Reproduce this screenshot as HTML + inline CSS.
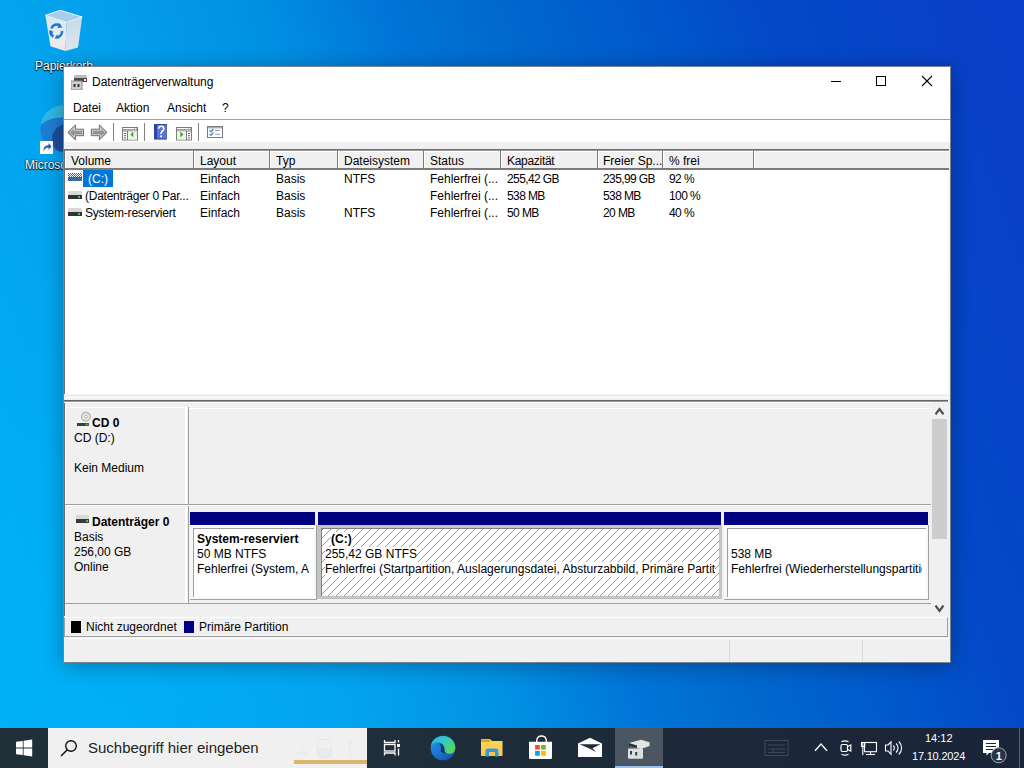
<!DOCTYPE html>
<html><head><meta charset="utf-8">
<style>
*{margin:0;padding:0;box-sizing:border-box}
html,body{width:1024px;height:768px;overflow:hidden}
body{position:relative;font-family:"Liberation Sans",sans-serif;font-size:12px;color:#000;
background:radial-gradient(ellipse 420px 380px at 120px 640px,rgba(0,184,255,.35),rgba(0,184,255,0) 100%),linear-gradient(70deg,#00b0f6 0%,#04a0ec 28%,#0090e2 41%,#0074d8 51%,#006cd0 57%,#0056ca 72%,#0448c8 80%,#0a3ec8 100%);}
.a{position:absolute}
.t{position:absolute;white-space:nowrap;line-height:14px}
.b{font-weight:bold}
#win{position:absolute;left:63px;top:66px;width:888px;height:597px;background:#f0f0f0;border:1px solid rgba(20,40,70,.55);box-shadow:0 3px 20px rgba(0,0,0,.3)}
.hd{position:absolute;top:150px;height:20px;background:#f0f0f0;border-top:1px solid #9a9a9a;box-shadow:inset 1px 1px 0 #fff;border-right:1px solid #7a7a7a;border-bottom:2px solid #7a7a7a}
.sep{position:absolute;top:123px;width:1px;height:18px;background:#808080}
</style></head>
<body>
<!-- desktop icons -->
<div id="desk">
<svg class="a" style="left:0;top:0" width="100" height="160" viewBox="0 0 100 160">
 <defs>
  <linearGradient id="rbl" x1="0" y1="0" x2="0" y2="1"><stop offset="0" stop-color="#d6e6f0"/><stop offset=".7" stop-color="#e8eef2"/><stop offset="1" stop-color="#f2e6e6"/></linearGradient>
  <linearGradient id="rbr" x1="0" y1="0" x2="0" y2="1"><stop offset="0" stop-color="#c4dcea"/><stop offset="1" stop-color="#dde6ec"/></linearGradient>
  <linearGradient id="eg" x1="0" y1="0" x2="1" y2="0"><stop offset="0" stop-color="#30b4ea"/><stop offset="1" stop-color="#38c0d8"/></linearGradient>
  <clipPath id="ec"><rect x="0" y="0" width="63" height="160"/></clipPath>
 </defs>
 <path d="M45.3 15.3 L66.7 22.3 L65.3 51.1 L50.5 46.2Z" fill="url(#rbl)"/>
 <path d="M66.7 22.3 L82.2 17 L78 47.6 L65.3 51.1Z" fill="url(#rbr)"/>
 <path d="M45.3 15.3 L60.4 10.3 L82.2 17 L66.7 22.3Z" fill="#a6cdea"/>
 <path d="M45.3 15.3 L60.4 10.3 L82.2 17 L66.7 22.3Z" fill="none" stroke="#e6f4fc" stroke-width="1"/>
 <g fill="none" stroke="#1e78d0" stroke-width="2.6">
  <path d="M51.5 28.5 A5.5 5.5 0 0 1 60 25.5"/>
  <path d="M62 31 A5.5 5.5 0 0 1 57.5 37"/>
  <path d="M53.5 36.5 A5.5 5.5 0 0 1 50.8 30.5"/>
 </g>
 <path d="M59 23 L62.5 27.5 L57.5 28Z M59 38.8 L54.5 38.5 L57 34.5Z M49 31 L51 35.5 L53.5 31.5Z" fill="#1e78d0"/>
 <g clip-path="url(#ec)">
  <circle cx="63.5" cy="128.5" r="23.3" fill="url(#eg)"/>
  <clipPath id="ec2"><circle cx="63.5" cy="128.5" r="23.3"/></clipPath>
  <g clip-path="url(#ec2)"><circle cx="61" cy="150" r="32.5" fill="#1d7ed4"/>
  <circle cx="67" cy="139" r="15" fill="#1c4e9c"/></g>
 </g>
 <rect x="40" y="141" width="13" height="13" fill="#fff"/>
 <path d="M43.5 151.5 Q43 145.5 48.5 145.3 L48.5 143.3 L51.5 146.5 L48.5 149.7 L48.5 147.6 Q45 147.5 43.5 151.5Z" fill="#2b5aa6"/>
</svg>
<div class="t" style="left:35px;top:59px;color:#fff;text-shadow:0 0 2px #000,0 1px 1px #000">Papierkorb</div>
<div class="t" style="left:25px;top:158px;color:#fff;text-shadow:0 0 2px #000,0 1px 1px #000">Microsoft Edge</div>
</div>
<div id="win"></div>
<!-- title bar -->
<div class="a" style="left:64px;top:67px;width:886px;height:52px;background:#fff"></div>
<svg class="a" style="left:71px;top:74px" width="16" height="16" viewBox="0 0 16 16">
  <rect x="3" y="1" width="13" height="3" rx="1" fill="#bdbdbd"/>
  <rect x="3" y="4" width="13" height="4" fill="#4a4a4a"/>
  <rect x="13" y="5" width="2" height="2" fill="#e8e8e8"/>
  <rect x="0" y="7" width="11" height="9" fill="#cfcfcf" stroke="#8a8a8a" stroke-width="1"/>
  <rect x="2.5" y="10" width="2" height="3" fill="#333"/><rect x="6.5" y="10" width="2" height="3" fill="#333"/>
</svg>
<div class="t" style="left:92px;top:75px">Datenträgerverwaltung</div>
<!-- caption buttons -->
<div class="a" style="left:831px;top:81px;width:10px;height:1px;background:#000"></div>
<div class="a" style="left:876px;top:76px;width:10px;height:10px;border:1px solid #000"></div>
<svg class="a" style="left:921px;top:75px" width="12" height="12" viewBox="0 0 12 12"><path d="M1 1 L11 11 M11 1 L1 11" stroke="#000" stroke-width="1.1"/></svg>
<!-- menu -->
<div class="t" style="left:73px;top:101px">Datei</div>
<div class="t" style="left:116px;top:101px">Aktion</div>
<div class="t" style="left:167px;top:101px">Ansicht</div>
<div class="t" style="left:222px;top:101px">?</div>
<div class="a" style="left:64px;top:119px;width:886px;height:1px;background:#a0a0a0"></div>
<!-- toolbar -->
<div class="a" style="left:64px;top:120px;width:886px;height:22px;background:#fff"></div>
<div class="sep" style="left:113px"></div>
<div class="sep" style="left:144px"></div>
<div class="sep" style="left:198px"></div>
<svg class="a" style="left:60px;top:120px" width="170" height="24" viewBox="60 120 170 24">
 <defs>
  <linearGradient id="ar" x1="0" y1="0" x2="0" y2="1"><stop offset="0" stop-color="#c4c4c4"/><stop offset=".55" stop-color="#8e8e8e"/><stop offset="1" stop-color="#b0b0b0"/></linearGradient>
 </defs>
 <path d="M67.8 132.4 L75.4 125 L75.4 129.2 L83.5 129.2 L83.5 135.7 L75.4 135.7 L75.4 139.8 Z" fill="url(#ar)" stroke="#6a6a6a" stroke-width="1" stroke-linejoin="round"/>
 <path d="M69.4 132.4 L74.4 127.5 L74.4 130.2 L82.5 130.2 L82.5 134.7 L74.4 134.7 L74.4 137.3 Z" fill="none" stroke="#f4f4f4" stroke-width=".7" opacity=".8"/>
 <path d="M107 132.4 L99.4 125 L99.4 129.2 L91.3 129.2 L91.3 135.7 L99.4 135.7 L99.4 139.8 Z" fill="url(#ar)" stroke="#6a6a6a" stroke-width="1" stroke-linejoin="round"/>
 <path d="M105.4 132.4 L100.4 127.5 L100.4 130.2 L92.3 130.2 L92.3 134.7 L100.4 134.7 L100.4 137.3 Z" fill="none" stroke="#f4f4f4" stroke-width=".7" opacity=".8"/>
 <!-- icon1 -->
 <rect x="122.5" y="127.5" width="15" height="12.5" fill="#fff" stroke="#7c7c7c"/>
 <path d="M123 129.6 L133 129.6" stroke="#9a9a9a" stroke-width="1.2"/>
 <rect x="133.6" y="128.6" width="1.4" height="1.4" fill="#7c7c7c"/><rect x="135.6" y="128.6" width="1.4" height="1.4" fill="#7c7c7c"/>
 <path d="M123 131 L137 131" stroke="#7c7c7c" stroke-width="1"/>
 <path d="M127.5 131 L127.5 140" stroke="#7c7c7c" stroke-width="1"/>
 <rect x="128" y="131.5" width="9" height="8" fill="#eef6ea"/>
 <path d="M124 133.5 L126 133.5 M124 135.7 L126 135.7 M124 137.9 L126 137.9" stroke="#606060" stroke-width="1"/>
 <path d="M130.3 134.5 L133.3 131.8 L133.3 137.3Z" fill="#3fa52f"/>
 <!-- help -->
 <rect x="154" y="124" width="12.8" height="15.6" fill="#2c46a8"/>
 <rect x="157" y="125" width="9" height="13.6" fill="#5a74d6"/>
 <path d="M158.6 128.8 Q158.8 126.3 161.2 126.3 Q163.8 126.3 163.8 128.8 Q163.8 130.4 162 131.5 Q161 132.2 161 134" stroke="#fff" stroke-width="1.6" fill="none"/>
 <rect x="160.2" y="135.4" width="1.8" height="1.8" fill="#fff"/>
 <!-- icon3 -->
 <rect x="176.5" y="127.5" width="15" height="12.5" fill="#fff" stroke="#7c7c7c"/>
 <path d="M177 129.6 L187 129.6" stroke="#9a9a9a" stroke-width="1.2"/>
 <rect x="187.6" y="128.6" width="1.4" height="1.4" fill="#7c7c7c"/><rect x="189.6" y="128.6" width="1.4" height="1.4" fill="#7c7c7c"/>
 <path d="M177 131 L191 131" stroke="#7c7c7c" stroke-width="1"/>
 <path d="M186.5 131 L186.5 140" stroke="#7c7c7c" stroke-width="1"/>
 <rect x="177" y="131.5" width="9" height="8" fill="#eef6ea"/>
 <path d="M188 133.5 L190 133.5 M188 135.7 L190 135.7 M188 137.9 L190 137.9" stroke="#606060" stroke-width="1"/>
 <path d="M180.3 131.8 L183.6 134.5 L180.3 137.3Z" fill="#3fa52f"/>
 <!-- checklist -->
 <rect x="207.5" y="126.5" width="15" height="11" fill="#fff" stroke="#7c7c7c"/>
 <path d="M208 127.8 L222 127.8" stroke="#8a8a8a" stroke-width="1"/>
 <path d="M209.5 130.3 L211 131.8 L213.3 129 M209.5 133.8 L211 135.3 L213.3 132.5" stroke="#3a82d6" stroke-width="1.2" fill="none"/>
 <path d="M215 130.5 L220 130.5 M215 134.3 L220 134.3" stroke="#8aa0b8" stroke-width="1"/>
</svg>
<!-- gray band -->
<!-- list view -->
<div class="a" style="left:64px;top:149px;width:885px;height:252px;background:#fff;border-top:1px solid #6e6e6e;border-left:1px solid #6e6e6e"></div>
<div class="hd" style="left:65px;width:129px"></div>
<div class="hd" style="left:194px;width:76px"></div>
<div class="hd" style="left:270px;width:68px"></div>
<div class="hd" style="left:338px;width:86px"></div>
<div class="hd" style="left:424px;width:77px"></div>
<div class="hd" style="left:501px;width:97px"></div>
<div class="hd" style="left:598px;width:65px"></div>
<div class="hd" style="left:663px;width:91px"></div>
<div class="hd" style="left:754px;width:195px;border-right:none"></div>
<div class="t" style="left:71px;top:154px">Volume</div>
<div class="t" style="left:200px;top:154px">Layout</div>
<div class="t" style="left:276px;top:154px">Typ</div>
<div class="t" style="left:344px;top:154px">Dateisystem</div>
<div class="t" style="left:430px;top:154px">Status</div>
<div class="t" style="left:507px;top:154px;letter-spacing:-.3px">Kapazität</div>
<div class="t" style="left:603px;top:154px">Freier Sp...</div>
<div class="t" style="left:669px;top:154px">% frei</div>
<!-- rows -->
<svg class="a" style="left:68px;top:173px" width="14" height="8" viewBox="0 0 14 8">
  <defs><pattern id="dith" width="2" height="2" patternUnits="userSpaceOnUse"><rect width="1" height="1" fill="#1c6fc0"/><rect x="1" y="1" width="1" height="1" fill="#1c6fc0"/></pattern></defs>
  <rect x="0" y="0" width="14" height="8" fill="url(#dith)"/>
  <rect x="0" y="4" width="14" height="4" fill="#0d4f8f" opacity=".7"/>
</svg>
<div class="a" style="left:83px;top:170px;width:30px;height:17px;background:#0078d7"></div>
<div class="t" style="left:88px;top:172px;color:#fff">(C:)</div>
<svg class="a" style="left:68px;top:191px" width="14" height="9" viewBox="0 0 14 9">
  <rect x="0" y="0" width="14" height="5" rx="1" fill="#d9d9d9"/><rect x="0" y="4" width="14" height="4" fill="#333"/><rect x="10" y="5" width="2" height="2" fill="#3cd23c"/>
</svg>
<svg class="a" style="left:68px;top:208px" width="14" height="9" viewBox="0 0 14 9">
  <rect x="0" y="0" width="14" height="5" rx="1" fill="#d9d9d9"/><rect x="0" y="4" width="14" height="4" fill="#333"/><rect x="10" y="5" width="2" height="2" fill="#3cd23c"/>
</svg>
<div class="t" style="left:85px;top:189px;letter-spacing:-.25px">(Datenträger 0 Par...</div>
<div class="t" style="left:85px;top:206px;letter-spacing:-.2px">System-reserviert</div>
<div class="t" style="left:200px;top:172px">Einfach</div>
<div class="t" style="left:200px;top:189px">Einfach</div>
<div class="t" style="left:200px;top:206px">Einfach</div>
<div class="t" style="left:276px;top:172px">Basis</div>
<div class="t" style="left:276px;top:189px">Basis</div>
<div class="t" style="left:276px;top:206px">Basis</div>
<div class="t" style="left:344px;top:172px">NTFS</div>
<div class="t" style="left:344px;top:206px">NTFS</div>
<div class="t" style="left:430px;top:172px">Fehlerfrei (...</div>
<div class="t" style="left:430px;top:189px">Fehlerfrei (...</div>
<div class="t" style="left:430px;top:206px">Fehlerfrei (...</div>
<div class="t" style="left:507px;top:172px;letter-spacing:-.6px">255,42 GB</div>
<div class="t" style="left:507px;top:189px;letter-spacing:-.6px">538 MB</div>
<div class="t" style="left:507px;top:206px;letter-spacing:-.6px">50 MB</div>
<div class="t" style="left:603px;top:172px;letter-spacing:-.6px">235,99 GB</div>
<div class="t" style="left:603px;top:189px;letter-spacing:-.6px">538 MB</div>
<div class="t" style="left:603px;top:206px;letter-spacing:-.6px">20 MB</div>
<div class="t" style="left:669px;top:172px;letter-spacing:-.6px">92 %</div>
<div class="t" style="left:669px;top:189px;letter-spacing:-.6px">100 %</div>
<div class="t" style="left:669px;top:206px;letter-spacing:-.6px">40 %</div>

<!-- splitter -->
<div class="a" style="left:64px;top:394px;width:885px;height:6px;background:#f0f0f0"></div>
<div class="a" style="left:64px;top:397px;width:885px;height:1px;background:#fff"></div>
<div class="a" style="left:64px;top:400px;width:884px;height:1px;background:#646464"></div>
<div class="a" style="left:64px;top:401px;width:884px;height:1px;background:#9a9a9a"></div>
<div class="a" style="left:65px;top:402px;width:866px;height:1px;background:#fff"></div>

<!-- graphic view -->
<div class="a" style="left:64px;top:403px;width:884px;height:213px;background:#f0f0f0;border-left:1px solid #6e6e6e"></div>
<!-- CD0 panel -->
<div class="a" style="left:65px;top:407px;width:123px;height:97px;border-top:1px solid #fff;border-left:1px solid #fff"></div>
<div class="a" style="left:188px;top:407px;width:1px;height:197px;background:#a0a0a0"></div>
<div class="a" style="left:185px;top:407px;width:2px;height:197px;background:#fff"></div>
<div class="a" style="left:189px;top:408px;width:742px;height:1px;background:#fff"></div>
<div class="a" style="left:65px;top:504px;width:866px;height:1px;background:#a0a0a0"></div>
<div class="a" style="left:65px;top:505px;width:866px;height:1px;background:#fff"></div>
<div class="a" style="left:65px;top:603px;width:866px;height:1px;background:#a0a0a0"></div>
<svg class="a" style="left:0;top:400px" width="100" height="40" viewBox="0 400 100 40"><circle cx="85.9" cy="416.8" r="4.4" fill="#e4e4e4" stroke="#b0b0b0" stroke-width="1.2"/><circle cx="85.9" cy="416.8" r="1.4" fill="#fff" stroke="#aaa" stroke-width=".8"/><rect x="77" y="423" width="11.8" height="3" fill="#3c3c3c"/><rect x="85.5" y="423.6" width="2" height="1.8" fill="#3cd23c"/></svg>
<div class="t b" style="left:92px;top:416px">CD 0</div>
<div class="t" style="left:74px;top:431px">CD (D:)</div>
<div class="t" style="left:74px;top:461px">Kein Medium</div>
<!-- Disk 0 panel -->
<svg class="a" style="left:75px;top:515px" width="16" height="10" viewBox="0 0 16 10">
  <rect x="1" y="0" width="13" height="4" rx="1" fill="#d9d9d9"/><rect x="1" y="4" width="13" height="4" fill="#3a3a3a"/><rect x="11" y="5" width="2" height="2" fill="#3cd23c"/>
</svg>
<div class="t b" style="left:92px;top:515px">Datenträger 0</div>
<div class="t" style="left:74px;top:530px">Basis</div>
<div class="t" style="left:74px;top:545px">256,00 GB</div>
<div class="t" style="left:74px;top:560px">Online</div>
<!-- partitions -->
<div class="a" style="left:190px;top:512px;width:125px;height:13px;background:#000080"></div>
<div class="a" style="left:318px;top:512px;width:403px;height:13px;background:#000080"></div>
<div class="a" style="left:724px;top:512px;width:204px;height:13px;background:#000080"></div>
<!-- sys reserved box -->
<div class="a" style="left:190px;top:525px;width:127px;height:75px;background:#f8f8f8;border-right:1px solid #a0a0a0;border-bottom:1px solid #a0a0a0"></div>
<div class="a" style="left:193px;top:528px;width:121px;height:69px;background:#fff;border-top:1px solid #a0a0a0;border-left:1px solid #a0a0a0"></div>
<div class="t b" style="left:197px;top:532px">System-reserviert</div>
<div class="t" style="left:197px;top:547px">50 MB NTFS</div>
<div class="t" style="left:197px;top:562px;width:112px;overflow:hidden">Fehlerfrei (System, Aktiv, Primäre Partition)</div>
<!-- C: box selected -->
<div class="a" style="left:317px;top:525px;width:405px;height:74px;background:#c4c4c4"></div>
<svg class="a" style="left:321px;top:528px" width="398" height="68" shape-rendering="crispEdges"><defs><pattern id="hp" x="3" y="0" width="8" height="8" patternUnits="userSpaceOnUse"><rect x="7" y="0" width="1" height="1" fill="#999"/><rect x="6" y="1" width="1" height="1" fill="#999"/><rect x="5" y="2" width="1" height="1" fill="#999"/><rect x="4" y="3" width="1" height="1" fill="#999"/><rect x="3" y="4" width="1" height="1" fill="#999"/><rect x="2" y="5" width="1" height="1" fill="#999"/><rect x="1" y="6" width="1" height="1" fill="#999"/><rect x="0" y="7" width="1" height="1" fill="#999"/></pattern></defs><rect width="398" height="68" fill="#fff"/><rect width="398" height="68" fill="url(#hp)"/><rect width="398" height="1" fill="#808080"/><rect width="1" height="68" fill="#808080"/></svg>
<div class="t b" style="left:331px;top:532px;background:#fff;line-height:15px">(C:)</div>
<div class="t" style="left:325px;top:547px;background:#fff;line-height:15px">255,42 GB NTFS</div>
<div class="t" style="left:325px;top:562px;width:390px;overflow:hidden;background:#fff;line-height:15px">Fehlerfrei (Startpartition, Auslagerungsdatei, Absturzabbild, Primäre Partition)</div>
<!-- recovery box -->
<div class="a" style="left:724px;top:525px;width:205px;height:75px;background:#f8f8f8;border-right:1px solid #a0a0a0;border-bottom:1px solid #a0a0a0"></div>
<div class="a" style="left:727px;top:528px;width:199px;height:69px;background:#fff;border-top:1px solid #a0a0a0;border-left:1px solid #a0a0a0"></div>
<div class="t" style="left:731px;top:547px">538 MB</div>
<div class="t" style="left:731px;top:562px;width:191px;overflow:hidden">Fehlerfrei (Wiederherstellungspartition)</div>
<!-- scrollbar -->
<div class="a" style="left:931px;top:402px;width:17px;height:214px;background:#f0f0f0"></div>
<svg class="a" style="left:930px;top:400px" width="18" height="20" viewBox="930 400 18 20"><path d="M936.2 413.4 L939.5 409 L942.8 413.4" stroke="#505050" stroke-width="2.2" fill="none" stroke-linecap="square" stroke-linejoin="miter"/></svg>
<div class="a" style="left:932px;top:419px;width:15px;height:120px;background:#cdcdcd"></div>
<svg class="a" style="left:930px;top:600px" width="18" height="16" viewBox="930 600 18 16"><path d="M936.2 606.4 L939.5 610.8 L942.8 606.4" stroke="#505050" stroke-width="2.2" fill="none" stroke-linecap="square" stroke-linejoin="miter"/></svg>

<!-- legend -->
<div class="a" style="left:64px;top:617px;width:884px;height:20px;border-top:1px solid #fff;border-left:1px solid #a0a0a0;border-right:1px solid #a0a0a0;border-bottom:1px solid #a0a0a0"></div>
<div class="a" style="left:71px;top:621px;width:10px;height:12px;background:#000"></div>
<div class="t" style="left:86px;top:620px">Nicht zugeordnet</div>
<div class="a" style="left:184px;top:621px;width:10px;height:12px;background:#000080"></div>
<div class="t" style="left:199px;top:620px">Primäre Partition</div>
<!-- status bar -->
<div class="a" style="left:64px;top:638px;width:885px;height:1px;background:#fff"></div>
<div class="a" style="left:729px;top:640px;width:1px;height:21px;background:#d8d8d8"></div>
<div class="a" style="left:862px;top:640px;width:1px;height:21px;background:#d8d8d8"></div>

<!-- taskbar -->
<div class="a" style="left:0;top:728px;width:1024px;height:40px;background:linear-gradient(90deg,#203038 0%,#1f2e3a 40%,#1c2738 75%,#1a2438 100%)"></div>
<div class="a" style="left:48px;top:728px;width:319px;height:40px;background:#f0f0f0"></div>
<div class="a" style="left:615px;top:728px;width:48px;height:40px;background:#4b5662"></div>
<div class="a" style="left:615px;top:766px;width:48px;height:2px;background:#99c2ea"></div>
<div class="t" style="left:88px;top:739px;font-size:15px;line-height:18px;color:#222">Suchbegriff hier eingeben</div>
<div class="t" style="left:925px;top:731px;font-size:11px;color:#fff">14:12</div>
<div class="t" style="left:912px;top:749px;font-size:11px;color:#fff;letter-spacing:-.2px">17.10.2024</div>
<svg class="a" style="left:0;top:0" width="1024" height="768" viewBox="0 0 1024 768">
<defs>
 <linearGradient id="e1" x1="0" y1="0" x2="1" y2="1"><stop offset="0" stop-color="#2a9be8"/><stop offset=".55" stop-color="#1a70cc"/><stop offset="1" stop-color="#0e4aa0"/></linearGradient>
 <linearGradient id="e2" x1="0" y1="0" x2="1" y2=".6"><stop offset="0" stop-color="#2ab8e8"/><stop offset=".5" stop-color="#30c8c8"/><stop offset="1" stop-color="#58d85a"/></linearGradient>
 <linearGradient id="fo" x1="0" y1="0" x2="0" y2="1"><stop offset="0" stop-color="#ffd65c"/><stop offset="1" stop-color="#f8c848"/></linearGradient>
</defs>
<!-- start -->
<path d="M16 741.8 L22.8 740.9 L22.8 747.6 L16 747.6Z M23.6 740.8 L32.2 739.6 L32.2 747.6 L23.6 747.6Z M16 748.4 L22.8 748.4 L22.8 755.1 L16 754.2Z M23.6 748.4 L32.2 748.4 L32.2 756.4 L23.6 755.2Z" fill="#fff"/>
<!-- search glass -->
<circle cx="71" cy="746" r="5.3" stroke="#111" stroke-width="1.4" fill="none"/><path d="M67.3 749.8 L61 756" stroke="#111" stroke-width="1.5"/>
<!-- search highlight faint -->
<g opacity=".22" fill="none" stroke="#c8c8c8" stroke-width="1"><path d="M300 746 L306 751 M301 741 L305 744 M298 753 L308 753"/><rect x="317.5" y="739.5" width="14" height="18" rx="3"/><path d="M350 740 L350 757 M347 744 L353 744"/></g>
<rect x="318" y="748" width="13" height="9" fill="#d8e4f2" opacity=".35"/>
<rect x="294" y="760" width="73" height="4" fill="#dcb46a"/>
<!-- task view -->
<g stroke="#fff" stroke-width="1.3" fill="none">
 <path d="M384.5 740 L384.5 742.5 L395 742.5 L395 740"/>
 <rect x="384.5" y="744.5" width="10.5" height="6.5"/>
 <path d="M384.5 755.5 L384.5 753 L395 753 L395 755.5"/>
 <path d="M398.5 740 L398.5 742.5 M398.5 748.5 L398.5 755.5"/>
</g>
<rect x="397" y="744" width="3" height="3" fill="#fff"/>
<!-- edge -->
<circle cx="443" cy="748" r="12.3" fill="url(#e1)"/>
<path d="M430.9 746 A12.3 12.3 0 0 1 455.3 748 C455.3 751.5 452.5 753.8 449.5 753.8 C446.5 753.8 444.5 752 444.5 749.5 C444.5 745 441.5 741.8 437 742 C434.5 742.2 432.5 743.8 430.9 746Z" fill="url(#e2)"/>
<path d="M444.5 749.5 C444.5 745.5 442 743.5 439 743.8 C441.3 745.3 441.6 748.5 440.6 751 C441.6 752.6 443.2 753.4 445.2 753.5 C444.8 752.5 444.5 751 444.5 749.5Z" fill="#163a66"/>
<!-- folder -->
<path d="M481 739 L490 739 L492 741 L502.5 741 L502.5 756 L481 756Z" fill="url(#fo)"/>
<rect x="481" y="739.5" width="9" height="2.5" fill="#e0a020"/>
<path d="M485.5 756.5 L485.5 751 Q485.5 748.6 488 748.6 L496 748.6 Q498.5 748.6 498.5 751 L498.5 756.5 L495 756.5 L495 752 L489 752 L489 756.5Z" fill="#3f95dc"/>
<!-- store -->
<path d="M536.8 742 L536.8 740 A4.8 4.8 0 0 1 546.3 740 L546.3 742" stroke="#fff" stroke-width="1.5" fill="none"/>
<path d="M529 741.8 L552 741.8 L552 757.5 Q552 759 550.5 759 L530.5 759 Q529 759 529 757.5Z" fill="#fff"/>
<rect x="535.1" y="745" width="4.7" height="4.6" fill="#f25022"/><rect x="541.1" y="745" width="4.7" height="4.6" fill="#7fba00"/>
<rect x="535.1" y="751" width="4.7" height="4.7" fill="#00a4ef"/><rect x="541.1" y="751" width="4.7" height="4.7" fill="#ffb900"/>
<!-- mail -->
<path d="M578 743.5 L590 737.8 L602 743.5 L602 757 L578 757Z" fill="#fff"/>
<path d="M579.5 744.2 L600.5 744.2 L592.5 748.3 L596 752.3 L590.5 749 Z" fill="#1d2b3c"/>
<!-- disk mgmt -->
<path d="M629 743 L641 739.8 L649.5 742.3 L649.5 746 L641 749 L629 746Z" fill="#e2e4e6"/>
<path d="M629 743 L637 745.5 L637 748 L629 746Z" fill="#2a2f36"/>
<rect x="628" y="748.6" width="15" height="10.2" rx="1" fill="#dcdee0"/>
<rect x="630" y="751" width="2" height="3.5" fill="#3a3f46"/><rect x="635.2" y="752" width="2" height="3.5" fill="#3a3f46"/>
<!-- tray -->
<g stroke="#3e4856" fill="none"><rect x="765" y="740.5" width="23" height="15"/><path d="M768 745 L785 745 M768 749 L785 749 M768 752.5 L785 752.5 M773 749 L773 752.5"/></g>
<path d="M815 750.8 L821 744 L827 750.8" stroke="#fff" stroke-width="1.3" fill="none"/>
<g stroke="#fff" stroke-width="1.2" fill="none">
 <rect x="841" y="744.5" width="6.5" height="7" rx="1.5"/><path d="M847.5 746.5 L850.8 745 L850.8 751 L847.5 749.5"/>
 <path d="M841.5 741.8 Q845 739.8 848.5 741.8 M841.5 754.2 Q845 756.2 848.5 754.2"/>
</g>
<g stroke="#fff" stroke-width="1.1" fill="none">
 <rect x="864.5" y="742.5" width="12" height="9.2"/><path d="M870.5 752 L870.5 754.5 M866 754.5 L875 754.5 M862.8 742 L862.8 755"/>
 <rect x="861.5" y="742.5" width="3.2" height="4"/>
</g>
<g stroke="#fff" stroke-width="1.1" fill="none">
 <path d="M885.5 745 L888 745 L891 741.8 L891 754.3 L888 751 L885.5 751Z"/>
 <path d="M893.3 745.5 A3.5 3.5 0 0 1 893.3 750.5 M896 743.5 A6 6 0 0 1 896 752.5 M898.8 741.5 A9 9 0 0 1 898.8 754.5"/>
</g>
<!-- action center -->
<path d="M983 740 L999 740 L999 753 L989 753 L986.5 755.5 L986.5 753 L983 753Z" fill="#fff"/>
<path d="M986 743.5 L996 743.5 M986 746.5 L996 746.5 M986 749.5 L993 749.5" stroke="#1b2538" stroke-width="1.1"/>
<circle cx="998.7" cy="755.3" r="7.5" fill="#2a3444" stroke="#a0a6ae" stroke-width="1"/>
<text x="998.7" y="759.5" font-family="Liberation Sans" font-weight="bold" font-size="11" fill="#fff" text-anchor="middle">1</text>
<rect x="1019" y="728" width="1" height="40" fill="#5a6470"/>
</svg>
</body></html>
